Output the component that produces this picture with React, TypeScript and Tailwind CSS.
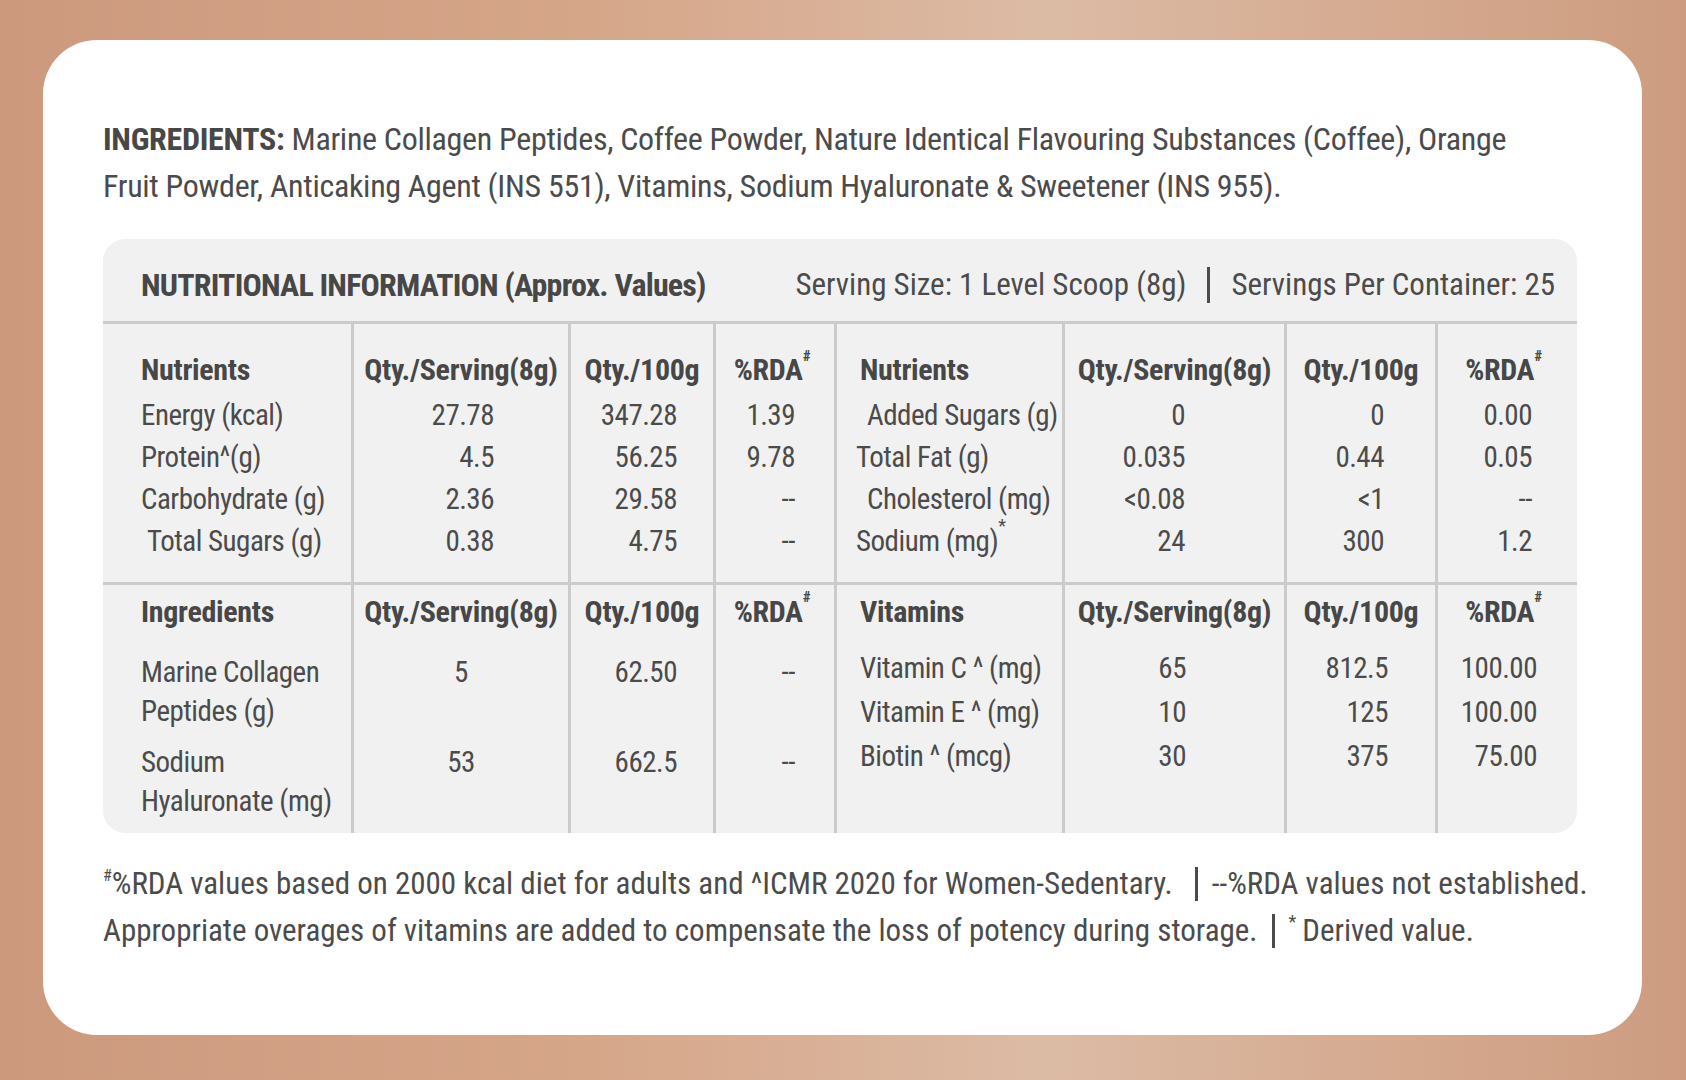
import React from "react";

type Cell = { text: React.ReactNode; cls?: string };

interface ColProps {
  width: string;
  header: React.ReactNode;
  headerCls: string;
  cells: Cell[];
  cellCls: string;
  top: string;
  headH: string;
  gap: string;
  rowH: string;
  last?: boolean;
}

function Col({ width, header, headerCls, cells, cellCls, top, headH, gap, rowH, last }: ColProps) {
  return (
    <div
      className={`${width} ${top} ${last ? "" : "border-r-[3px] border-[#cbcbcb]"} flex flex-col whitespace-nowrap`}
    >
      <div className={`${headH} flex items-center font-bold text-[#474747] text-[30px] tracking-[-0.3px] ${headerCls}`}>
        {header}
      </div>
      <div className={gap} />
      {cells.map((c, i) => (
        <div key={i} className={`${rowH} ${cellCls} ${c.cls ?? ""}`}>
          {c.text}
        </div>
      ))}
    </div>
  );
}

const RDA = (
  <span>
    %RDA<sup className="text-[15px] align-[12px] font-bold">#</sup>
  </span>
);

const c = (arr: React.ReactNode[]): Cell[] => arr.map((t) => ({ text: t }));

export default function App() {
  const sec1 = { top: "pt-[21px]", headH: "h-[49px]", gap: "h-0", rowH: "h-[42px] leading-[42px]" };
  const sec2L = { top: "pt-[4px]", headH: "h-[44px]", gap: "h-[21px]", rowH: "h-[92px] leading-[39px]" };
  const sec2R = { top: "pt-[4px]", headH: "h-[44px]", gap: "h-[13px]", rowH: "h-[44px] leading-[44px]" };

  return (
    <div className="w-[1686px] h-[1080px] bg-[linear-gradient(90deg,#cc997d_0%,#d6a689_35%,#dcbba5_62%,#d4a88d_85%,#cd9c80_100%)] pt-[40px] pl-[43px] pr-[44px] font-['Roboto_Condensed','Noto_Sans',sans-serif] font-stretch-[75%] text-[#4b4b4b]">
      <div className="h-[995px] rounded-[54px] bg-white pl-[60px] pr-[40px] pt-[76px]">
        <p className="text-[32px] leading-[47px] whitespace-nowrap tracking-[-0.3px]">
          <span className="font-bold text-[#474747]">INGREDIENTS:</span> Marine Collagen Peptides, Coffee
          Powder, Nature Identical Flavouring Substances (Coffee), Orange
          <br />
          Fruit Powder, Anticaking Agent (INS 551), Vitamins, Sodium Hyaluronate &amp; Sweetener (INS 955).
        </p>

        <div className="mt-[29px] w-[1474px] rounded-[22px] bg-[#f1f1f1] overflow-hidden text-[29px] tracking-[-0.5px]">
          <div className="h-[85px] pt-[10px] flex items-center justify-between pl-[38px] pr-[22px] border-b-[3px] border-[#cbcbcb] whitespace-nowrap">
            <span className="font-bold text-[32px] text-[#474747] tracking-[-0.8px]">
              NUTRITIONAL INFORMATION (Approx. Values)
            </span>
            <span className="flex items-center text-[31px] tracking-normal">
              Serving Size: 1 Level Scoop (8g)
              <span className="inline-block w-[3px] h-[36px] bg-[#4b4b4b] mx-[21px]" />
              Servings Per Container: 25
            </span>
          </div>

          <div className="flex h-[261px] border-b-[3px] border-[#cbcbcb]">
            <Col
              {...sec1}
              width="w-[251px]"
              header="Nutrients"
              headerCls="pl-[38px]"
              cellCls="pl-[38px]"
              cells={[
                { text: "Energy (kcal)" },
                { text: "Protein^(g)" },
                { text: "Carbohydrate (g)" },
                { text: "Total Sugars (g)", cls: "pl-[44px]" },
              ]}
            />
            <Col {...sec1} width="w-[217px]" header="Qty./Serving(8g)" headerCls="justify-center" cellCls="text-right pr-[74px]" cells={c(["27.78", "4.5", "2.36", "0.38"])} />
            <Col {...sec1} width="w-[145px]" header="Qty./100g" headerCls="justify-center" cellCls="text-right pr-[36px]" cells={c(["347.28", "56.25", "29.58", "4.75"])} />
            <Col {...sec1} width="w-[121px]" header={RDA} headerCls="justify-center pr-[6px]" cellCls="text-right pr-[39px]" cells={c(["1.39", "9.78", "--", "--"])} />
            <Col
              {...sec1}
              width="w-[228px]"
              header="Nutrients"
              headerCls="pl-[23px]"
              cellCls="pl-[19px]"
              cells={[
                { text: "Added Sugars (g)", cls: "pl-[30px]" },
                { text: "Total Fat (g)" },
                { text: "Cholesterol (mg)", cls: "pl-[30px]" },
                {
                  text: (
                    <span>
                      Sodium (mg)<sup className="text-[18px] align-[10px]">*</sup>
                    </span>
                  ),
                },
              ]}
            />
            <Col {...sec1} width="w-[222px]" header="Qty./Serving(8g)" headerCls="justify-center" cellCls="text-right pr-[99px]" cells={c(["0", "0.035", "<0.08", "24"])} />
            <Col {...sec1} width="w-[151px]" header="Qty./100g" headerCls="justify-center" cellCls="text-right pr-[51px]" cells={c(["0", "0.44", "<1", "300"])} />
            <Col {...sec1} width="w-[139px]" header={RDA} headerCls="justify-center pr-[8px]" cellCls="text-right pr-[45px]" cells={c(["0.00", "0.05", "--", "1.2"])} last />
          </div>

          <div className="flex h-[248px]">
            <Col
              {...sec2L}
              width="w-[251px]"
              header="Ingredients"
              headerCls="pl-[38px]"
              cellCls="pl-[38px]"
              cells={c([
                <>
                  Marine Collagen
                  <br />
                  Peptides (g)
                </>,
                <>
                  Sodium
                  <br />
                  Hyaluronate (mg)
                </>,
              ])}
            />
            <Col {...sec2L} width="w-[217px]" header="Qty./Serving(8g)" headerCls="justify-center" cellCls="text-center" cells={c(["5", "53"])} />
            <Col {...sec2L} width="w-[145px]" header="Qty./100g" headerCls="justify-center" cellCls="text-right pr-[36px]" cells={c(["62.50", "662.5"])} />
            <Col {...sec2L} width="w-[121px]" header={RDA} headerCls="justify-center pr-[6px]" cellCls="text-right pr-[39px]" cells={c(["--", "--"])} />
            <Col
              {...sec2R}
              width="w-[228px]"
              header="Vitamins"
              headerCls="pl-[23px]"
              cellCls="pl-[23px]"
              cells={c(["Vitamin C ^ (mg)", "Vitamin E ^ (mg)", "Biotin ^ (mcg)"])}
            />
            <Col {...sec2R} width="w-[222px]" header="Qty./Serving(8g)" headerCls="justify-center" cellCls="text-right pr-[98px]" cells={c(["65", "10", "30"])} />
            <Col {...sec2R} width="w-[151px]" header="Qty./100g" headerCls="justify-center" cellCls="text-right pr-[47px]" cells={c(["812.5", "125", "375"])} />
            <Col {...sec2R} width="w-[139px]" header={RDA} headerCls="justify-center pr-[8px]" cellCls="text-right pr-[40px]" cells={c(["100.00", "100.00", "75.00"])} last />
          </div>
        </div>

        <div className="mt-[27px] text-[31px] leading-[47px] whitespace-nowrap">
          <div className="flex items-center">
            <sup className="text-[16px] align-[12px]">#</sup>%RDA values based on 2000 kcal diet for adults and
            ^ICMR 2020 for Women-Sedentary.
            <span className="inline-block w-[3px] h-[34px] bg-[#4b4b4b] ml-[22px] mr-[14px]" />
            --%RDA values not established.
          </div>
          <div className="flex items-center">
            Appropriate overages of vitamins are added to compensate the loss of potency during storage.
            <span className="inline-block w-[3px] h-[34px] bg-[#4b4b4b] mx-[14px]" />
            <sup className="text-[18px] align-[10px] mr-[6px]">*</sup>Derived value.
          </div>
        </div>
      </div>
    </div>
  );
}
